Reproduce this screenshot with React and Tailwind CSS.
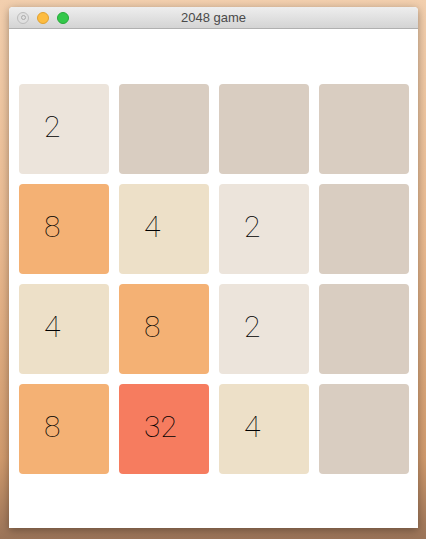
const board = [
  [2, 0, 0, 0],
  [8, 4, 2, 0],
  [4, 8, 2, 0],
  [8, 32, 4, 0],
];

const tileColors = {
  0: 'bg-[#d9cdc1]',
  2: 'bg-[#ece4db]',
  4: 'bg-[#ede0c8]',
  8: 'bg-[#f4b174]',
  32: 'bg-[#f67c5f]',
};

const Tile = ({ value }) => (
  <div className={`w-[90px] h-[90px] rounded-[4px] flex items-center pl-[25px] pb-[4px] ${tileColors[value]}`}>
    {value > 0 && (
      <span className="text-[30px] font-thin text-black leading-none" style={{ fontFamily: 'Roboto, Lato, sans-serif' }}>
        {value}
      </span>
    )}
  </div>
);

export default function App() {
  return (
    <div className="w-[426px] h-[539px] pl-[9px] pr-[8px] pt-[7px] pb-[11px] bg-[linear-gradient(180deg,#f2cfae_0%,#e9b98f_45%,#d09a6d_85%,#9a7358_100%)]">
      <div className="w-full h-full flex flex-col bg-white rounded-t-[4px] shadow-[0_2px_8px_rgba(0,0,0,0.35)] overflow-hidden">
        {/* Title bar */}
        <div className="relative h-[22px] shrink-0 flex items-center px-[8px] gap-[8px] bg-[linear-gradient(180deg,#eeeeee,#d4d4d4)] border-b border-[#b0b0b0]">
          <span className="w-[12px] h-[12px] rounded-full bg-[#e0e0e0] border border-[#bcbcbc] flex items-center justify-center">
            <span className="w-[5px] h-[5px] rounded-full border border-[#aaa]" />
          </span>
          <span className="w-[12px] h-[12px] rounded-full bg-[#fdbc40] border border-[#e0a130]" />
          <span className="w-[12px] h-[12px] rounded-full bg-[#34c84a] border border-[#26a93a]" />
          <div
            className="absolute inset-0 flex items-center justify-center text-[13px] text-[#4a4a4a]"
            style={{ fontFamily: '"Liberation Sans", Arial, sans-serif' }}
          >
            2048 game
          </div>
        </div>

        {/* Board */}
        <div className="pt-[55px] pl-[10px]">
          <div className="grid grid-cols-[repeat(4,90px)] gap-[10px]">
            {board.flat().map((v, i) => (
              <Tile key={i} value={v} />
            ))}
          </div>
        </div>
      </div>
    </div>
  );
}
